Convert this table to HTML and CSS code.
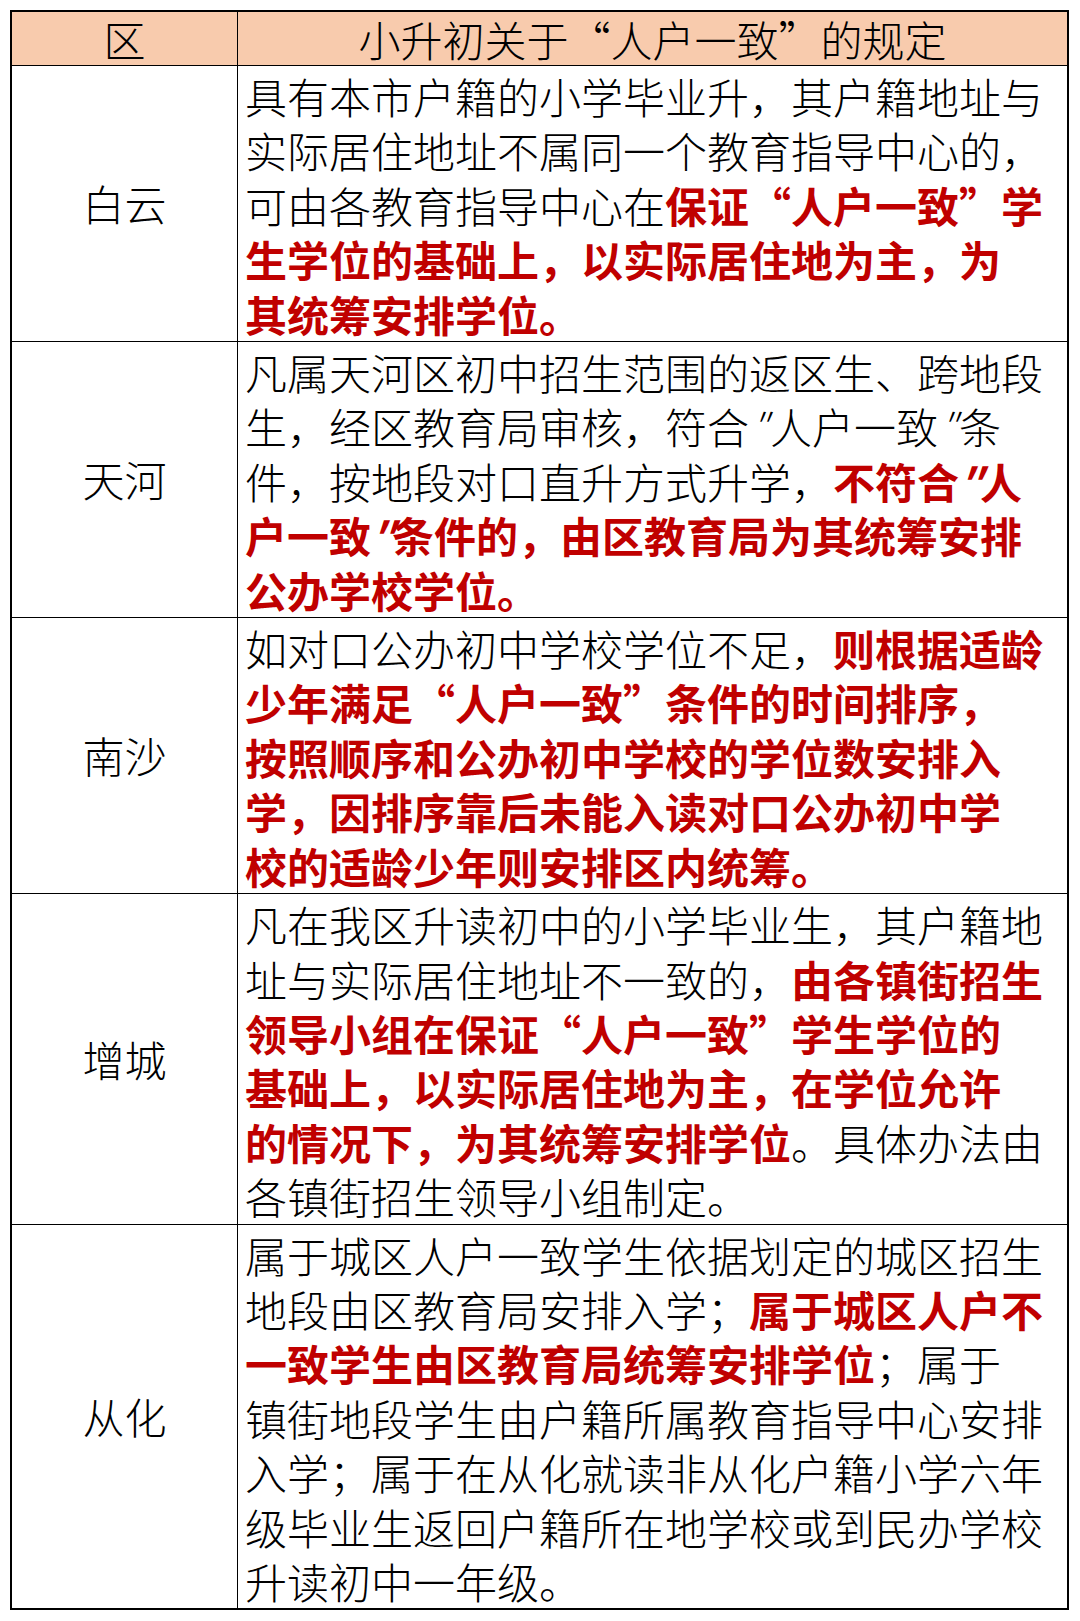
FILE: index.html
```html
<!DOCTYPE html>
<html lang="zh-CN">
<head>
<meta charset="utf-8">
<title>小升初关于“人户一致”的规定</title>
<link rel="stylesheet" href="styles.css">
</head>
<body>
<div class="sheet">
  <div class="cell head name">区</div>
  <div class="cell head rule-head">小升初关于“人户一致”的规定</div>

  <div class="cell name">白云</div>
  <div class="cell rule">具有本市户籍的小学毕业升，其户籍地址与<br>实际居住地址不属同一个教育指导中心的，<br>可由各教育指导中心在<b>保证“人户一致”学</b><br><b>生学位的基础上，以实际居住地为主，为</b><br><b>其统筹安排学位。</b></div>

  <div class="cell name">天河</div>
  <div class="cell rule">凡属天河区初中招生范围的返区生、跨地段<br>生，经区教育局审核，符合<span class="dq">″</span>人户一致<span class="dq">″</span>条<br>件，按地段对口直升方式升学，<b>不符合<span class="dq">″</span>人</b><br><b>户一致<span class="dq">″</span>条件的，由区教育局为其统筹安排</b><br><b>公办学校学位。</b></div>

  <div class="cell name">南沙</div>
  <div class="cell rule">如对口公办初中学校学位不足，<b>则根据适龄</b><br><b>少年满足“人户一致”条件的时间排序，</b><br><b>按照顺序和公办初中学校的学位数安排入</b><br><b>学，因排序靠后未能入读对口公办初中学</b><br><b>校的适龄少年则安排区内统筹。</b></div>

  <div class="cell name">增城</div>
  <div class="cell rule">凡在我区升读初中的小学毕业生，其户籍地<br>址与实际居住地址不一致的，<b>由各镇街招生</b><br><b>领导小组在保证“人户一致”学生学位的</b><br><b>基础上，以实际居住地为主，在学位允许</b><br><b>的情况下，为其统筹安排学位</b>。具体办法由<br>各镇街招生领导小组制定。</div>

  <div class="cell name last">从化</div>
  <div class="cell rule last">属于城区人户一致学生依据划定的城区招生<br>地段由区教育局安排入学；<b>属于城区人户不</b><br><b>一致学生由区教育局统筹安排学位</b>；属于<br>镇街地段学生由户籍所属教育指导中心安排<br>入学；属于在从化就读非从化户籍小学六年<br>级毕业生返回户籍所在地学校或到民办学校<br>升读初中一年级。</div>
</div>
</body>
</html>
```

FILE: styles.css
```css
html, body {
  margin: 0;
  padding: 0;
  background: #ffffff;
}

.sheet {
  display: grid;
  grid-template-columns: 226px 829px;
  width: 1055px;
  margin: 10px 0 0 10px;
  border: 2px solid #000;
  font-family: "Noto Sans CJK SC", "Noto Sans", sans-serif;
  font-size: 42px;
  font-weight: 300;
  color: #000;
}

.cell {
  border-bottom: 1px solid #000;
}

.cell.last {
  border-bottom: none;
}

.name {
  border-right: 1px solid #000;
  display: flex;
  align-items: center;
  justify-content: center;
  line-height: 54.4px;
}

.head {
  background: #f8cbad;
  line-height: 53px;
  text-align: center;
  white-space: nowrap;
}

.rule-head {
  display: block;
}

.rule {
  padding: 3px 7px 0 7px;
  line-height: 54.4px;
  white-space: nowrap;
}

.rule b {
  color: #c00000;
  font-weight: 700;
}

.dq {
  display: inline-block;
  width: 0.5em;
  line-height: 1;
  vertical-align: baseline;
  text-align: center;
  font-style: italic;
}
```
